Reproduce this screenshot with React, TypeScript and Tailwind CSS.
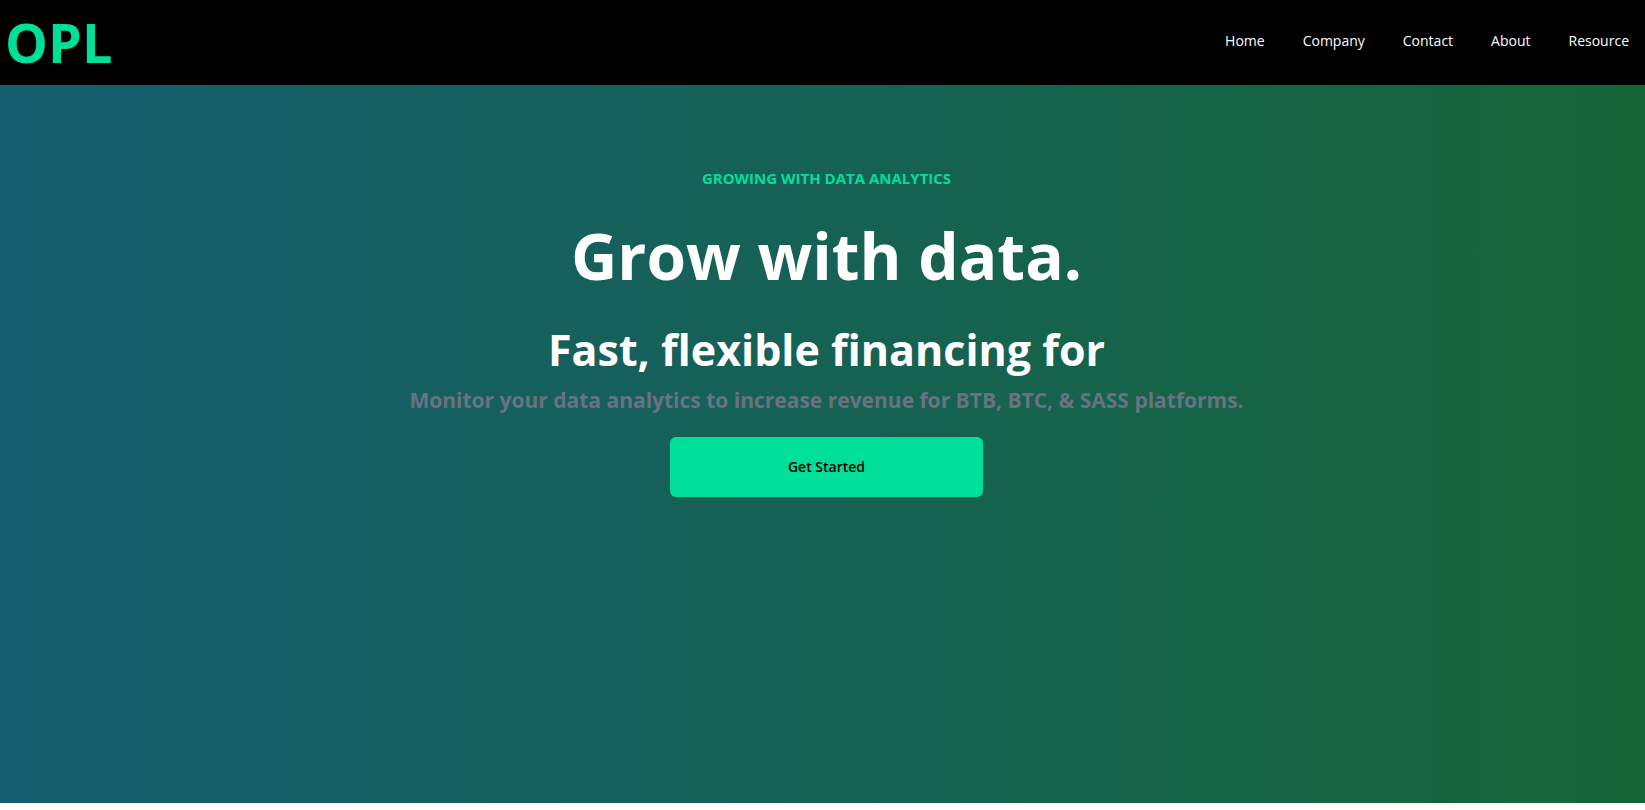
const links = ['Home', 'Company', 'Contact', 'About', 'Resource'];

export default function App() {
  return (
    <div className="font-['Open_Sans','Noto_Sans',sans-serif] text-base text-white">
      <header className="flex h-[85px] items-center justify-between bg-black pl-[5px]">
        <h1 className="pb-0.5 text-[54px] leading-[80px] font-bold text-[#00df9a]">OPL</h1>
        <nav aria-label="Main" className="mb-1 pr-4">
          <ul className="flex gap-[38px] text-[14px] leading-6">
            {links.map((link) => (
              <li key={link}>
                <a href="#">{link}</a>
              </li>
            ))}
          </ul>
        </nav>
      </header>
      <main className="h-[calc(100vh-92px)] bg-linear-to-r/srgb from-[#155e70] to-[#166538] pt-[81px] pl-2">
        <section className="flex flex-col items-center text-center font-bold">
          <p className="text-[15px] leading-6 text-[#00df9a]">GROWING WITH DATA ANALYTICS</p>
          <h2 className="mt-[22px] text-[64px] leading-[88px]">Grow with data.</h2>
          <p className="mt-6 text-[43px] leading-[52px]">Fast, flexible financing for</p>
          <p className="mt-2 text-[21px] leading-8 text-gray-500">
            Monitor your data analytics to increase revenue for BTB, BTC, &amp; SASS platforms.
          </p>
          <button type="button" className="mt-[21px] h-[60px] w-[313px] rounded-md bg-[#00df9a] pb-0.5 text-[14px] font-semibold text-black">
            Get Started
          </button>
        </section>
      </main>
    </div>
  );
}
